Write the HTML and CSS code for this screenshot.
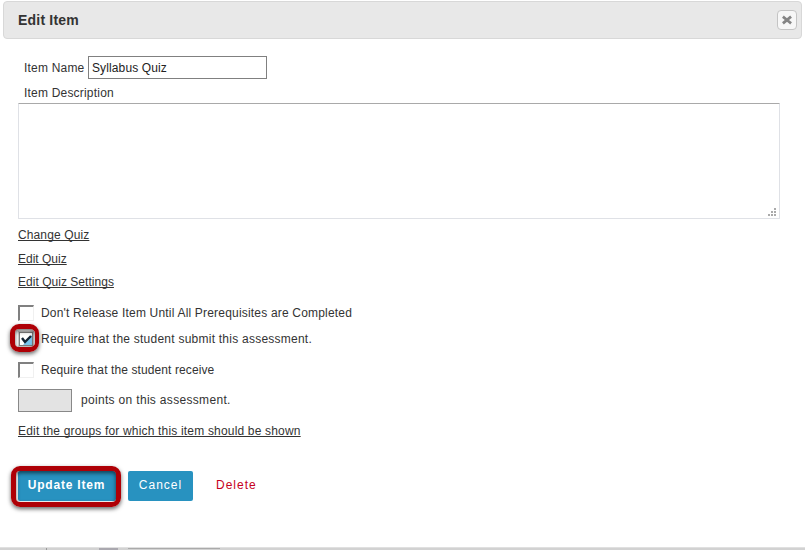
FILE: index.html
```html
<!DOCTYPE html>
<html lang="en">
<head>
<meta charset="utf-8">
<title>Edit Item</title>
<link rel="stylesheet" href="styles.css">
</head>
<body>
<div class="dialog">
  <header class="titlebar">
    <h1>Edit Item</h1>
    <button class="close" aria-label="Close"><svg width="10" height="10" viewBox="0 0 10 10"><path d="M2 2.5l6 5M8 2.5l-6 5" stroke="#858585" stroke-width="2.8" stroke-linecap="square"/></svg></button>
  </header>
  <form class="content">
    <div class="row name"><label for="name">Item Name</label><input id="name" type="text" value="Syllabus Quiz"></div>
    <div class="row desc-label">Item Description</div>
    <div class="textarea"><svg width="9" height="9" viewBox="0 0 9 9" fill="#aaa"><path d="M6 0h2v2h-2zM3 3h2v2h-2zM6 3h2v2h-2zM0 6h2v2h-2zM3 6h2v2h-2zM6 6h2v2h-2z"/></svg></div>
    <div class="row link1"><a>Change Quiz</a></div>
    <div class="row link2"><a>Edit Quiz</a></div>
    <div class="row link3"><a>Edit Quiz Settings</a></div>
    <div class="row check1"><span class="box"></span><span>Don't Release Item Until All Prerequisites are Completed</span></div>
    <div class="row check2"><span class="box checked"><svg width="14" height="14" viewBox="0 0 14 14"><path d="M13 3v10H4z" fill="#79c5ee"/><path d="M3 6l3 4 6-6" fill="none" stroke="#142333" stroke-width="2.4"/><rect x=".5" y=".5" width="13" height="13" fill="none" stroke="#000" stroke-dasharray="1 1"/></svg><span class="ring"></span></span><span>Require that the student submit this assessment.</span></div>
    <div class="row check3"><span class="box"></span><span>Require that the student receive</span></div>
    <div class="row points"><span class="pointbox"></span><span class="points-label">points on this assessment.</span></div>
    <div class="row groups"><a>Edit the groups for which this item should be shown</a></div>
    <div class="actions">
      <span class="btn update">Update Item<span class="ring"></span></span>
      <span class="btn cancel">Cancel</span>
      <a class="delete">Delete</a>
    </div>
  </form>
</div>
<div class="backdrop"><i class="m1"></i><i class="m2"></i><i class="m3"></i></div>
</body>
</html>
```
FILE: styles.css
```css
* { box-sizing: border-box; }
body { margin: 0; height: 550px; overflow: hidden; background: #fff; color: #333; font: 12px/16px "Liberation Sans", Arial, sans-serif; letter-spacing: .2px; }
.dialog { height: 547px; padding: 1px 3px 0; border-radius: 0 0 4px 4px; }
.titlebar { height: 38px; border: 1px solid #d8d8d8; border-radius: 4px; background: #e8e8e8; display: flex; align-items: center; justify-content: space-between; padding: 0 4px 0 14px; }
h1 { margin: 0; font-size: 14px; letter-spacing: .2px; }
.close { width: 20px; height: 20px; padding: 0; border: 1px solid #c4c4c4; border-radius: 4px; background: #f7f7f7; display: flex; align-items: center; justify-content: center; }
.content { padding: 17px 0 0 15px; }
.row { display: flex; align-items: center; white-space: nowrap; }
a { text-decoration: underline; text-underline-offset: 1px; text-decoration-skip-ink: none; }
.name { height: 23px; padding-left: 6px; }
.name label { width: 64px; }
.name input { width: 179px; height: 23px; border: 1px solid #808080; padding: 0 3px; font: inherit; letter-spacing: .12px; color: #222; background: #fff; }
.desc-label { height: 24px; padding: 3px 0 0 6px; }
.textarea { width: 762px; height: 116px; border: 1px solid #dfe1e6; border-top-color: #a9a9a9; border-radius: 1px; display: flex; justify-content: flex-end; align-items: flex-end; padding: 0 2px 1px; }
.link1 { height: 32px; letter-spacing: .12px; }
.link2 { height: 16px; letter-spacing: 0; }
.link3 { height: 16px; margin-top: 7px; letter-spacing: .03px; }
.check1 { height: 16px; margin-top: 15px; letter-spacing: .19px; }
.check2 { height: 16px; margin-top: 10px; letter-spacing: .24px; }
.check3 { height: 16px; margin-top: 15px; letter-spacing: .1px; }
.box { position: relative; width: 16px; height: 16px; margin-right: 7px; border: 1px solid #f0f0f0; border-top: 2px solid #808080; border-left: 2px solid #808080; }
.checked { border: 1px solid #ccc; }
.checked svg { display: block; }
.ring { position: absolute; border: 5px solid #ae0006; border-radius: 9px; box-shadow: 0 2px 4px #0009, inset 0 2px 4px #0009; }
.checked .ring { inset: -8px -6px -6px -9px; border-width: 5px 4px 5px 5px; }
.points { height: 23px; margin-top: 11px; letter-spacing: .32px; }
.points-label { padding-bottom: 2px; }
.pointbox { width: 54px; height: 23px; margin-right: 9px; background: #e3e3e3; border: 1px solid #888; }
.groups { height: 16px; margin-top: 11px; letter-spacing: .18px; }
.actions { margin-top: 32px; height: 30px; display: flex; align-items: center; letter-spacing: 1px; }
.btn { position: relative; height: 30px; background: #2892c0; color: #fff; display: flex; align-items: center; justify-content: center; padding-bottom: 3px; border-radius: 2px; }
.update { width: 98px; margin-right: 12px; font-weight: bold; letter-spacing: .8px; padding-right: 1px; }
.update .ring { inset: -5px -5px -6px -7px; }
.cancel { width: 65px; margin-right: 23px; }
.delete { color: #c60021; text-decoration: none; padding-bottom: 3px; }
.backdrop { height: 3px; background: #d2d2d2; border-top: 1px solid #e0e0e0; display: flex; }
.m1 { width: 1px; margin-left: 46px; background: #999; }
.m2 { width: 19px; margin-left: 52px; background: #aaa8af; }
.m3 { width: 92px; height: 1px; margin-left: 10px; background: #aaa; }
```
